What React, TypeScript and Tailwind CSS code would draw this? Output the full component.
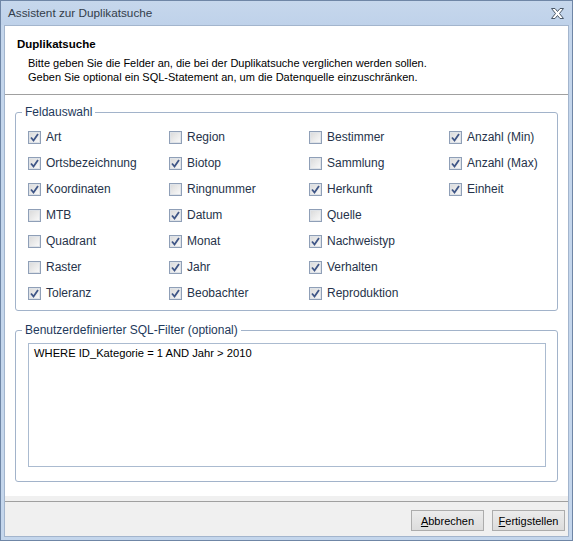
import React from "react";

const cols: [string, boolean][][] = [
  [["Art", true], ["Ortsbezeichnung", true], ["Koordinaten", true], ["MTB", false], ["Quadrant", false], ["Raster", false], ["Toleranz", true]],
  [["Region", false], ["Biotop", true], ["Ringnummer", false], ["Datum", true], ["Monat", true], ["Jahr", true], ["Beobachter", true]],
  [["Bestimmer", false], ["Sammlung", false], ["Herkunft", true], ["Quelle", false], ["Nachweistyp", true], ["Verhalten", true], ["Reproduktion", true]],
  [["Anzahl (Min)", true], ["Anzahl (Max)", true], ["Einheit", true]],
];

function Check({ checked }: { checked: boolean }) {
  return (
    <div className="w-[13px] h-[13px] border border-[#8f9fb7] bg-[#f4f4f4] flex items-center justify-center shrink-0">
      <div className="w-[11px] h-[11px] border border-[#dfe3e8] bg-gradient-to-br from-[#dcdcdc] to-[#f8f8f8] flex items-center justify-center">
        {checked && (
          <svg width="9" height="9" viewBox="0 0 9 9">
            <path d="M1 4.5 L3.5 7.5 L8 1" fill="none" stroke="#3f5687" strokeWidth="1.8" strokeLinejoin="miter" />
          </svg>
        )}
      </div>
    </div>
  );
}

function CloseIcon() {
  return (
    <svg width="13" height="11" viewBox="0 0 13 11">
      <path
        d="M0.5 0.5 H4 L6.5 3.5 L9 0.5 H12.5 L8.5 5.5 L12.5 10.5 H9 L6.5 7.5 L4 10.5 H0.5 L4.5 5.5 Z"
        fill="#ffffff"
        stroke="#4a5868"
        strokeWidth="1"
      />
    </svg>
  );
}

export default function App() {
  return (
    <div
      className="w-[573px] h-[541px] border border-[#6f86a6] bg-[#c4d6ec] flex flex-col text-[11px] leading-[14px]"
      style={{ fontFamily: '"Liberation Sans", Arial, sans-serif' }}
    >
      <div className="h-[24px] flex items-center justify-between pl-[7px] pr-[8px] bg-gradient-to-b from-[#c6d7ec] to-[#bfd2ea]">
        <span className="text-[11.75px] text-[#333d4a]">Assistent zur Duplikatsuche</span>
        <CloseIcon />
      </div>
      <div className="flex-1 mx-[3px] mb-[3px] border border-[#a3b5cd] bg-white flex flex-col">
        <div className="h-[69px] pl-[12px] pt-[11px] border-b border-[#a0a0a0] text-black">
          <div className="font-bold text-[11.5px]">Duplikatsuche</div>
          <div className="pl-[11px] pt-[5px]">
            <div>Bitte geben Sie die Felder an, die bei der Duplikatsuche verglichen werden sollen.</div>
            <div>Geben Sie optional ein SQL-Statement an, um die Datenquelle einzuschränken.</div>
          </div>
        </div>
        <div className="flex-1 px-[10px] pt-[10px] flex flex-col gap-[12px]">
          <fieldset className="border border-[#a2b3ca] rounded-[3px] pb-[4px]">
            <legend className="ml-[6px] px-[3px] text-[12px] leading-[14px] text-[#1e395b]">Feldauswahl</legend>
            <div className="grid grid-cols-[141px_140px_140px_1fr] pl-[12px] pt-[5px]">
              {cols.map((c, ci) => (
                <div key={ci} className="flex flex-col">
                  {c.map(([label, on]) => (
                    <div key={label} className="h-[26px] flex items-center gap-[5px] text-[12px] text-[#26334a]">
                      <Check checked={on} />
                      <span>{label}</span>
                    </div>
                  ))}
                </div>
              ))}
            </div>
          </fieldset>
          <fieldset className="border border-[#a2b3ca] rounded-[3px] px-[12px] pt-[6px] pb-[14px] mr-0">
            <legend className="-ml-[6px] px-[3px] text-[12px] leading-[14px] text-[#1e395b]">Benutzerdefinierter SQL-Filter (optional)</legend>
            <div className="h-[124px] border border-[#abbbd0] pl-[5px] pt-[2px] text-[11.2px] text-black mr-[-1px]">
              WHERE ID_Kategorie = 1 AND Jahr &gt; 2010
            </div>
          </fieldset>
        </div>
        <div className="h-[5px] bg-[#f0f0f0]" />
        <div className="flex-1 max-h-[35px] min-h-[35px] border-t border-[#a0a0a0] bg-[#f0f0f0] flex justify-end items-start pt-[8px] pr-[3px] gap-[8px]">
          <button className="w-[73px] h-[21px] border border-[#acacac] bg-gradient-to-b from-[#ececec] to-[#dcdcdc] text-black">
            <u>A</u>bbrechen
          </button>
          <button className="w-[73px] h-[21px] border border-[#acacac] bg-gradient-to-b from-[#ececec] to-[#dcdcdc] text-black">
            <u>F</u>ertigstellen
          </button>
        </div>
      </div>
    </div>
  );
}
